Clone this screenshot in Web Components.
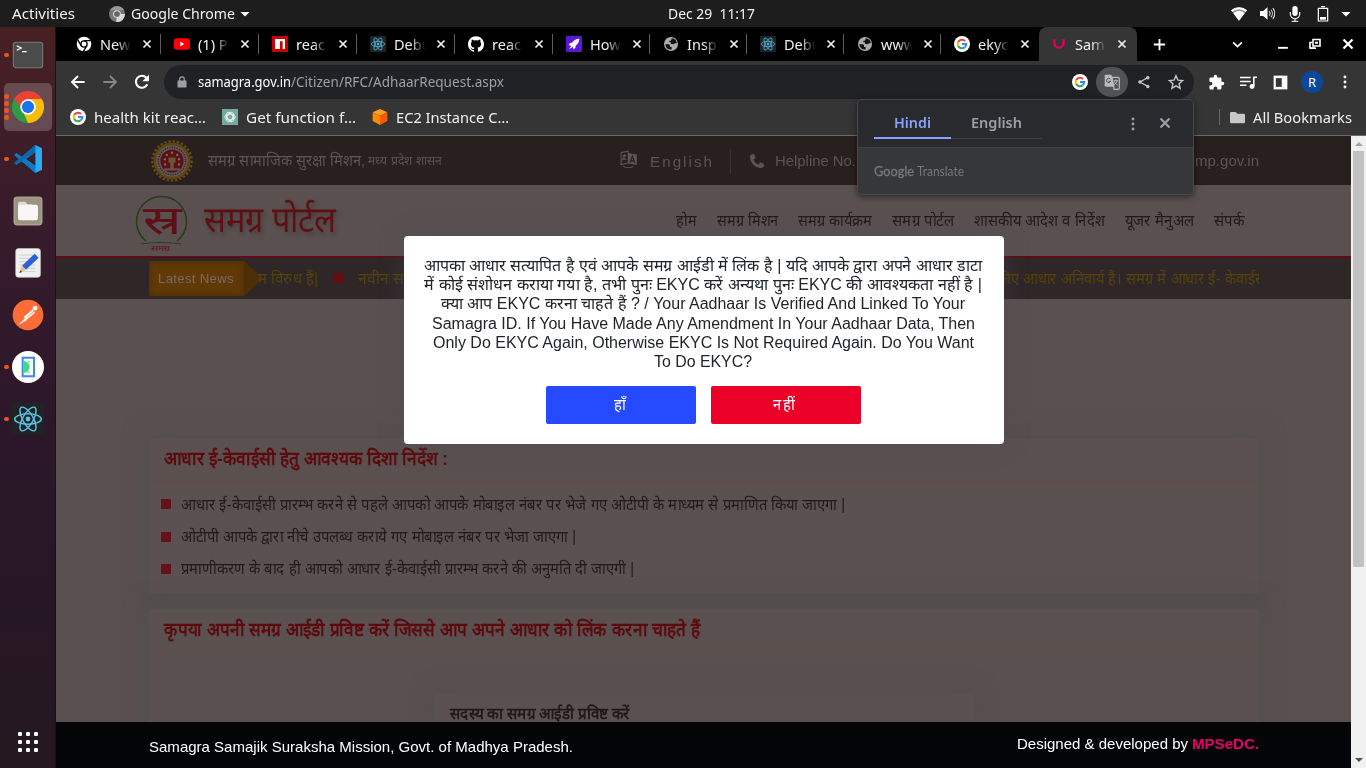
<!DOCTYPE html>
<html lang="hi">
<head>
<meta charset="utf-8">
<title>Samagra</title>
<style>
html,body{margin:0;height:100%;overflow:hidden;background:#000}
body{font-family:"Liberation Sans",Arial,sans-serif}
</style>
</head>
<body>
<desk-top></desk-top>
<script>
const UI = '"Noto Sans","Open Sans",sans-serif';
const G = '<circle cx="12" cy="12" r="12" fill="#fff"/><g fill="none" stroke-width="3.1"><path d="M16.6 7.6A6.4 6.4 0 0 0 6.3 9.1" stroke="#ea4335"/><path d="M6.3 9.1a6.4 6.4 0 0 0 0 5.8" stroke="#fbbc05"/><path d="M6.3 14.9a6.4 6.4 0 0 0 9.6 2.2" stroke="#34a853"/><path d="M12 12.1h6.4a6.4 6.4 0 0 1-2.5 5" stroke="#4285f4"/></g>';
const REACT = '<g fill="none" stroke="#56c4e8" stroke-width="1.1"><ellipse cx="12" cy="12" rx="10" ry="3.9"/><ellipse cx="12" cy="12" rx="10" ry="3.9" transform="rotate(60 12 12)"/><ellipse cx="12" cy="12" rx="10" ry="3.9" transform="rotate(120 12 12)"/></g><circle cx="12" cy="12" r="1.8" fill="#56c4e8"/>';
const GLOBE = '<circle cx="12" cy="12" r="10.5" fill="#a9adb2"/><path d="M3.500 12.500h4.500c1.500 0 2.500 1 2.500 2.500v1.500h2.500v3.500c-6 1.500-9-3-9.500-7.500zM13 3.500c4.500.3 7.500 3.500 7.800 7.500h-3l-1.500 1.500-4.300-.5V9.500h-2.500V7h2l1-1z" fill="#111"/>';
const KNOT = [0,60,120,180,240,300].map(a=>`<path d="M8 14V8.200L12.500 5.500a3.600 3.600 0 0 1 5.300 3.500" transform="rotate(${a} 12 12)"/>`).join('');
const ICONS = {
 chromeMono:'<circle cx="12" cy="12" r="12" fill="#777"/><path d="M12 12L24 12A12 12 0 0 1 11 24z" fill="#d8d8d8"/><path d="M2 6A12 12 0 0 1 22.500 6H12z" fill="#999"/><circle cx="12" cy="12" r="5.800" fill="#ddd"/><circle cx="12" cy="12" r="4.300" fill="#666"/>',
 chromeTab:'<circle cx="12" cy="12" r="11" fill="#fff"/><circle cx="12" cy="12" r="4.700" fill="none" stroke="#000" stroke-width="2"/><path d="M12 7h10M7.700 14.400L2.800 5.800M16.300 14.400L11 23.500" stroke="#000" stroke-width="2"/>',
 chrome:'<path d="M12 12L1.600 6A12 12 0 0 1 22.400 6z" fill="#ea4335"/><path d="M12 12L22.400 6A12 12 0 0 1 12 24z" fill="#fbbc05"/><path d="M12 12L12 24A12 12 0 0 1 1.600 6z" fill="#2a9d45"/><path d="M12 6h10.400L17 15z" fill="#fbbc05"/><path d="M17.200 15L12 24l-3-7z" fill="#fbbc05"/><path d="M1.600 6L7 15l5-9z" fill="#ea4335"/><path d="M1.600 6L7 15l5 3z" fill="#2a9d45"/><circle cx="12" cy="12" r="5.800" fill="#fff"/><circle cx="12" cy="12" r="4.600" fill="#1a73e8"/>',
 youtube:'<rect y="3.500" width="24" height="17" rx="4.500" fill="#f00"/><path d="M9.500 8.500v7l6-3.500z" fill="#fff"/>',
 npm:'<path fill="#cb0000" d="M0 0h24v24H0z"/><path fill="#fff" d="M4.500 4.500h15v15H16V8h-4v11.500H4.500z"/>',
 react:'<rect width="24" height="24" rx="2" fill="#20232a"/>'+REACT,
 reactDock:'<rect width="24" height="24" rx="1" fill="#202224"/>'+REACT,
 github:'<path fill="#fff" d="M12 .5C5.400.5 0 5.800 0 12.500c0 5.300 3.400 9.700 8.200 11.300.6.100.8-.3.800-.6v-2.200c-3.300.7-4-1.400-4-1.400-.6-1.400-1.400-1.800-1.400-1.800-1-.7.1-.7.1-.7 1.200.1 1.900 1.200 1.900 1.200 1 1.900 2.800 1.300 3.500 1 .1-.8.400-1.300.8-1.600-2.700-.3-5.500-1.300-5.500-5.900 0-1.300.5-2.400 1.200-3.200-.1-.3-.5-1.500.1-3.200 0 0 1-.3 3.300 1.200a11.500 11.500 0 0 1 6 0C17.300 5.100 18.300 5.400 18.300 5.400c.6 1.700.2 2.900.1 3.200.8.800 1.200 1.900 1.200 3.200 0 4.600-2.800 5.600-5.500 5.900.5.400.9 1.100.9 2.200v3.300c0 .3.200.7.800.6A12 12 0 0 0 24 12.500C24 5.800 18.600.5 12 .5z"/>',
 rocket:'<rect width="24" height="24" rx="2" fill="#5a17d6"/><path d="M20 4c-5 0-9 2.500-11 6L5.500 11 4 14l4 .500L4.500 20l6-4 .5 4 3-2 .5-3.500C18 12 20 8 20 4z" fill="#fff"/>',
 globe:GLOBE, google:G,
 samagra:'<path d="M5 5v5.500a7 7 0 0 0 14 0V5" fill="none" stroke="#e5005b" stroke-width="3.400"/>',
 x:'<path d="M6 6l12 12M18 6L6 18" stroke="currentColor" stroke-width="3" fill="none"/>',
 plus:'<path d="M12 3v18M3 12h18" stroke="#fff" stroke-width="3"/>',
 chev:'<path d="M4 8l8 8 8-8" stroke="#fff" stroke-width="3" fill="none"/>',
 min:'<path d="M2 20h18" stroke="#fff" stroke-width="3.500"/>',
 restore:'<path d="M8 3h14v13H8zM12 20H2V9h4" stroke="#fff" stroke-width="3.200" fill="none"/><path d="M12 7.500h6v4h-6z" fill="#fff"/><path d="M2 20.500h12" stroke="#fff" stroke-width="3"/>',
 back:'<path d="M22 12H4M12 3l-9 9 9 9" stroke="currentColor" stroke-width="2.800" fill="none"/>',
 fwd:'<path d="M2 12h18M12 3l9 9-9 9" stroke="currentColor" stroke-width="2.800" fill="none"/>',
 reload:'<path d="M20 15.500A9 9 0 1 1 18.500 5.500L20 8" stroke="#fff" stroke-width="3.200" fill="none"/><path d="M22.500 1v10h-10z" fill="#fff"/>',
 lock:'<path d="M3 9h18v14H3z" fill="#9aa0a6"/><path d="M7.500 10V6a4.500 4.500 0 0 1 9 0v4" stroke="#9aa0a6" stroke-width="2.500" fill="none"/>',
 trans:'<path d="M1 1h10l5 18H3a2 2 0 0 1-2-2z" fill="#bbb"/><path d="M12 5h9a2 2 0 0 1 2 2v14a2 2 0 0 1-2 2h-6z" fill="none" stroke="#bbb" stroke-width="1.700"/><path d="M14.500 10h7M18 8v2M20 10c-1 3-3 5-5 6M15.500 11c1 3 3 4 5 6" stroke="#bbb" stroke-width="1.400" fill="none"/><path d="M9.500 7.600A3.200 3.200 0 1 0 10 11H7" stroke="#505256" stroke-width="1.500" fill="none"/>',
 share:'<path d="M18.500 4.500L5 12l13.500 7.500" stroke="#c5c5c5" stroke-width="2" fill="none"/><g fill="#c5c5c5"><circle cx="18.500" cy="4.500" r="3"/><circle cx="5" cy="12" r="3"/><circle cx="18.500" cy="19.500" r="3"/></g>',
 star:'<path d="M12 2.500l2.900 6.600 7.100.7-5.400 4.700 1.600 7L12 17.800 5.800 21.500l1.600-7L2 9.800l7.100-.7z" fill="none" stroke="#c8c8c8" stroke-width="2"/>',
 puzzle:'<path fill="#fff" d="M20.500 11H19V7a2 2 0 0 0-2-2h-4V3.500a2.500 2.500 0 0 0-5 0V5H4a2 2 0 0 0-2 2v3.800h1.500a2.700 2.700 0 0 1 0 5.400H2V20c0 1.100.9 2 2 2h3.800v-1.500a2.700 2.700 0 0 1 5.400 0V22H17a2 2 0 0 0 2-2v-4h1.500a2.500 2.500 0 0 0 0-5z"/>',
 music:'<path d="M0 5h15M0 10.500h15M0 16h9M19.500 17V4.500H24" stroke="#fff" stroke-width="2.200" fill="none"/><circle cx="17" cy="17.500" r="3.500" fill="#fff"/>',
 panel:'<path fill="#fff" d="M1 1h22v22H1z"/><path fill="#353535" d="M4.500 5h9.500v14H4.500z"/>',
 dots:'<g fill="currentColor"><circle cx="12" cy="3.500" r="2.500"/><circle cx="12" cy="12" r="2.500"/><circle cx="12" cy="20.500" r="2.500"/></g>',
 gpt:'<path fill="#74aa9c" d="M0 0h24v24H0z"/><g fill="none" stroke="#fff" stroke-width="1.200">'+KNOT+'</g>',
 cube:'<path d="M12 0l11 5-11 5L1 5z" fill="#ff9d1c"/><path d="M1 5l11 5v14L1 18z" fill="#ff8a00"/><path d="M23 5l-11 5v14l11-6z" fill="#f25c05"/>',
 folder:'<path d="M0 5a2 2 0 0 1 2-2h7l3 3h10a2 2 0 0 1 2 2v11a2 2 0 0 1-2 2H2a2 2 0 0 1-2-2z" fill="#c7c7c7"/>',
 wifi:'<path d="M0 6.500a18 18 0 0 1 24 0L12 22z" fill="#999"/><path d="M0 6.500a18 18 0 0 1 24 0l-1.800 2.200a15 15 0 0 0-20.400 0zM3.500 10.800a13 13 0 0 1 17 0L12 22z" fill="#fff"/>',
 vol:'<path d="M0 8h5l7-6v20l-7-6H0z" fill="#fff"/><path d="M14.500 8.500a5 5 0 0 1 0 7M17.500 6a9 9 0 0 1 0 12M20.500 3.500a13 13 0 0 1 0 17" stroke="#ddd" stroke-width="1.700" fill="none"/>',
 mic:'<rect x="8" y="0" width="8" height="15" rx="4" fill="#fff"/><path d="M5 9v3a7 7 0 0 0 14 0V9M12 19v4M7 23h10" stroke="#ddd" stroke-width="2" fill="none"/>',
 batt:'<path d="M5 3.500h14v19H5zM9 1h6" fill="none" stroke="#fff" stroke-width="1.800"/><path d="M7.500 16.500h9v4h-9z" fill="#fff"/>',
 tri:'<path d="M1 7h22L12 18z" fill="#fff"/>',
 term:'<rect x="1" y="2.500" width="22" height="19" rx="2" fill="#4b4b4b" stroke="#777" stroke-width=".8"/><path d="M3.500 5l3.500 1.700-3.500 1.700M7.500 9.500H11" stroke="#fff" stroke-width=".9" fill="none"/>',
 vscode:'<path d="M17.500 1.500L6 12l11.500 10.500V17L10.500 12l7-5z" fill="#1789d0"/><path d="M3.300 7.500L1.500 9l16 13.500V17z" fill="#0b7bc5"/><path d="M3.300 16.500L1.500 15l16-13.500V7z" fill="#0a69ad"/><path d="M17.500 1.500L22.500 4v16l-5 2.500z" fill="#2ba9f3"/>',
 files:'<rect x="1.500" y="1.500" width="21" height="21" rx="2" fill="#9b9482" stroke="#bdb7a4" stroke-width=".6"/><path d="M4.500 6.500A1.500 1.500 0 0 1 6 5h4l1.500 2H15v3H4.500z" fill="#dedad2"/><rect x="4.500" y="7.300" width="15" height="11.700" rx="1.800" fill="#f8f7f5"/>',
 editor:'<rect x="2.800" y="1.200" width="18.500" height="21.500" rx="2" fill="#f1f1f1" stroke="#ccc" stroke-width=".5"/><path d="M5.500 6h12M5.500 8.500h12M5.500 11h12M5.500 13.500h12M5.500 16h12M5.500 18.500h12" stroke="#ccc" stroke-width=".7"/><path d="M17 5l3 3-9.500 9-3-3z" fill="#2f62d8"/><path d="M7.500 14l3 3-5 2.500z" fill="#e9bd8d"/><path d="M6.500 17.500l1 1.200-2 .8z" fill="#333"/>',
 postman:'<circle cx="12" cy="12" r="11.500" fill="#ff6c37"/><circle cx="17.300" cy="6.800" r="1.800" fill="#fff"/><path d="M15.500 8L9 13.500l2 1.800 6-5zM10 14.500L5.500 18.800l5.500-3z" fill="#fff" stroke="#fff" stroke-width=".4"/><path d="M16.500 9l-5 4.500" stroke="#ff6c37" stroke-width=".6"/>',
 android:'<circle cx="12" cy="12" r="12" fill="#fff"/><path d="M8 5h8.500v14H8z" fill="none" stroke="#4285f4" stroke-width="1.500"/><path d="M8.700 7.500a4.500 4.500 0 0 1 0 9z" fill="#3ddc84"/><path d="M12 8.500l1.200-1M12 15.500l1.200 1" stroke="#3ddc84" stroke-width=".8"/>',
 lang:'<path d="M1.500 3.500l9.500-2v16l-9.500 2z" fill="none" stroke="#5c5353" stroke-width="1.500"/><path d="M11 4l11.500 2v14L11 18z" fill="#5c5353"/><path d="M3.500 7.500h5M6 5.500v2c0 3-1.500 5-3 6M4 9.500c1 2 2.500 3 4.500 3.500" stroke="#5c5353" stroke-width="1.500" fill="none"/><path d="M13.500 16.500l3-8 3.500 9M14.500 14.500h4" stroke="#281f1f" stroke-width="1.700" fill="none"/><path d="M4 21.500c4 2.500 10 2.500 14 .500" stroke="#5c5353" stroke-width="1.400" fill="none"/>',
 phone:'<path fill="#5c5353" d="M6.500 1C4 1 1.500 3 1.500 6 2 15 9 22 18 22.500c3 0 4.800-2.500 4.800-5 0-.6-.3-.8-.8-1.100l-4-2.100c-.7-.4-1.300-.3-1.800.3l-1.700 2.100c-.4.400-.8.500-1.400.2-2.700-1.500-4.600-3.300-6-6-.3-.6-.2-1 .2-1.400l2-1.700c.6-.5.7-1 .4-1.800L7.600 1.900C7.400 1.300 7 1 6.500 1z"/>',
 emblem:'<circle cx="12" cy="12" r="10.500" fill="#5d4612"/><circle cx="12" cy="12" r="11.200" fill="none" stroke="#654b12" stroke-width="1.400" stroke-dasharray="1.300 1.100"/><circle cx="12" cy="12" r="9" fill="#625555"/><circle cx="12" cy="12" r="7.800" fill="none" stroke="#332a2a" stroke-width=".9" stroke-dasharray=".7 .7"/><circle cx="12" cy="12" r="6.600" fill="#5c1014"/><g fill="#75655f"><circle cx="9" cy="8.500" r=".7"/><circle cx="12" cy="7.300" r=".7"/><circle cx="15" cy="8.500" r=".7"/><circle cx="8" cy="11" r=".7"/><circle cx="16" cy="11" r=".7"/><circle cx="8" cy="14" r=".7"/><circle cx="16" cy="14" r=".7"/></g><path d="M10 10h4v3h-1v3.500h-2V13h-1z" fill="#6b5638"/><path d="M7.500 16.800h9" stroke="#625555" stroke-width="1.200"/>',
};
class UiIcon extends HTMLElement{
 connectedCallback(){ if(this.shadowRoot) return;
  const s=this.getAttribute('size')||16;
  this.attachShadow({mode:'open'}).innerHTML=`<style>:host{display:block;flex:none;width:${s}px;height:${s}px}svg{display:block}</style><svg width="${s}" height="${s}" viewBox="0 0 24 24">${ICONS[this.getAttribute('name')]}</svg>`;
 }}
customElements.define('ui-icon',UiIcon);

/* One line of text set to an exact measure. */
class FitText extends HTMLElement{
 static all=[];
 connectedCallback(){ if(this.shadowRoot) return;
  this.w=+this.getAttribute('w');
  this.attachShadow({mode:'open'}).innerHTML=`<style>:host{display:block;flex:none;width:${this.w}px;white-space:pre}span{display:inline-block;transform-origin:0 50%}</style><span><slot></slot></span>`;
  FitText.all.push(this);
 }
 fit(){const s=this.shadowRoot.querySelector('span');const n=s.getBoundingClientRect().width;if(n)s.style.transform=`scaleX(${this.w/n})`;}
}
customElements.define('fit-text',FitText);

const define=(tag,css,html)=>customElements.define(tag,class extends HTMLElement{
 connectedCallback(){ if(this.shadowRoot) return;
  const t=document.createElement('template');
  t.innerHTML=`<style>*{box-sizing:border-box}${css}</style>${typeof html==='function'?html(this):html}`;
  this.attachShadow({mode:'open'}).append(document.importNode(t.content,true));
 }});

define('top-panel',`:host{display:flex;align-items:center;height:27px;background:#1d1d1d;color:#f2f2f2;font:14.500px/27px ${UI};padding:0 15px 0 12px}
 .l{display:flex;align-items:center;width:656px}.r{display:flex;align-items:center;margin-left:auto}`,
 `<div class="l"><fit-text w="63">Activities</fit-text><ui-icon name="chromeMono" size="16" style="margin:0 6px 0 34px"></ui-icon><fit-text w="104">Google Chrome</fit-text><ui-icon name="tri" size="10" style="margin-left:5px"></ui-icon></div>
 <fit-text w="87">Dec 29  11:17</fit-text>
 <div class="r"><ui-icon name="wifi" size="16"></ui-icon><ui-icon name="vol" size="15" style="margin:0 12px 0 13px"></ui-icon><ui-icon name="mic" size="16"></ui-icon><ui-icon name="batt" size="16" style="margin:0 10px 0 12px"></ui-icon><ui-icon name="tri" size="10"></ui-icon></div>`);

define('dock-item',`:host{display:grid;grid-template-columns:8px 1fr;align-items:center;width:48px;height:48px;margin:0 4px 4px;border-radius:5px}
 :host([active]){background:rgba(255,255,255,.2)}
 .d{display:flex;flex-direction:column;gap:2.500px}.d i{width:4.500px;height:4.500px;border-radius:50%;background:#e95420}`,
 h=>`<div class="d">${'<i></i>'.repeat(+h.getAttribute('dots')||0)}</div><ui-icon name="${h.getAttribute('icon')}" size="32"></ui-icon>`);
define('app-dock',`:host{display:flex;flex-direction:column;width:56px;height:741px;padding-top:4px;background:linear-gradient(#482022,#3b1d2a 18%,#2d172b 50%,#281727 68%,#251820);border-right:1px solid #1c1119}
 .g{display:grid;grid-template-columns:repeat(3,4px);gap:4px;margin:auto 0 16px 18px}.g i{height:4px;border-radius:1px;background:#fff}`,
 `<dock-item icon="term" dots="1"></dock-item><dock-item icon="chrome" dots="4" active></dock-item><dock-item icon="vscode" dots="1"></dock-item><dock-item icon="files"></dock-item><dock-item icon="editor"></dock-item><dock-item icon="postman"></dock-item><dock-item icon="android" dots="1"></dock-item><dock-item icon="reactDock" dots="1"></dock-item><div class="g">${'<i></i>'.repeat(9)}</div>`);

define('browser-tab',`:host{display:flex;align-items:center;width:98px;height:34px;padding-left:11px;color:#f0f0f0;flex:none}
 :host([late]){width:97px}
 :host([active]){background:#353535;border-radius:8px 8px 0 0;padding-left:12px;width:98px;margin-left:-1px}
 .t{width:33px;margin:0 7px 0 8px;overflow:hidden;white-space:nowrap;-webkit-mask:linear-gradient(90deg,#000 50%,transparent 95%);mask:linear-gradient(90deg,#000 50%,transparent 95%)}
 .s{width:1px;height:20px;background:#5c5c5c;margin:0 2px 0 auto}:host([active]) .s,:host([last]) .s{display:none}`,
 h=>`<ui-icon name="${h.getAttribute('icon')}" size="16"></ui-icon><div class="t"><slot></slot></div><ui-icon name="x" size="14"></ui-icon><div class="s"></div>`);
define('tab-strip',`:host{display:flex;height:34px;background:#000;padding-left:9px;font:14.500px/34px ${UI};align-items:center}`,
 `<browser-tab icon="chromeTab">New</browser-tab><browser-tab icon="youtube">(1) P</browser-tab><browser-tab icon="npm">reac</browser-tab><browser-tab icon="react">Debu</browser-tab><browser-tab icon="github">reac</browser-tab><browser-tab late icon="rocket">How</browser-tab><browser-tab late icon="globe">Insp</browser-tab><browser-tab late icon="react">Debu</browser-tab><browser-tab late icon="globe">www</browser-tab><browser-tab late icon="google" last>ekyc</browser-tab><browser-tab icon="samagra" active>Sam</browser-tab>
 <ui-icon name="plus" size="15" style="margin-left:15px"></ui-icon><ui-icon name="chev" size="13" style="margin-left:64px"></ui-icon><ui-icon name="min" size="13" style="margin-left:33px;margin-top:-2px"></ui-icon><ui-icon name="restore" size="12" style="margin-left:19px"></ui-icon><ui-icon name="x" size="18" style="margin-left:18px;color:#fff"></ui-icon>`);

define('tool-bar',`:host{display:flex;align-items:center;height:42px;background:#353535;padding-left:14px;color:#fff;font:14px/34px ${UI}}
 .o{display:flex;align-items:center;width:1030px;height:34px;margin:0 14px 0 14px;padding-left:12px;border-radius:17px;background:#202124}
 .u{color:#9aa0a6;display:flex}.g{color:#fff}.c{display:grid;place-items:center;width:32px;height:30px;border-radius:16px;background:#505256;margin:0 12px 0 8px}
 .a{display:grid;place-items:center;width:22px;height:22px;border-radius:50%;background:#0b479b;font-size:13px;line-height:22px;margin:0 15px 0 13px}`,
 `<ui-icon name="back" size="16" style="color:#fff"></ui-icon><ui-icon name="fwd" size="16" style="color:#858585;margin:0 16px"></ui-icon><ui-icon name="reload" size="16"></ui-icon>
 <div class="o"><ui-icon name="lock" size="12" style="margin-right:10px"></ui-icon><div class="u"><fit-text class="g" w="93">samagra.gov.in</fit-text><fit-text w="213">/Citizen/RFC/AdhaarRequest.aspx</fit-text></div>
 <ui-icon name="google" size="16" style="margin-left:auto"></ui-icon><div class="c"><ui-icon name="trans" size="16"></ui-icon></div>
 <ui-icon name="share" size="14" style="margin:0 17px 0 -3px"></ui-icon><ui-icon name="star" size="16" style="margin-right:10px"></ui-icon></div>
 <ui-icon name="puzzle" size="17"></ui-icon><ui-icon name="music" size="17" style="margin:0 16px 0 15px"></ui-icon><ui-icon name="panel" size="15"></ui-icon><div class="a">R</div><ui-icon name="dots" size="14"></ui-icon>`);

define('bookmark-bar',`:host{display:flex;align-items:center;height:33px;background:#353535;border-bottom:1px solid #6a6a6a;padding:0 14px 4px;color:#f0f0f0;font:14.500px/28px ${UI}}
 fit-text{margin:-1px 16px 0 8px}.s{width:1px;height:16px;background:#696969;margin:0 10px 0 auto}`,
 `<ui-icon name="google" size="16"></ui-icon><fit-text w="112">health kit reac…</fit-text><ui-icon name="gpt" size="16"></ui-icon><fit-text w="110">Get function f…</fit-text><ui-icon name="cube" size="16"></ui-icon><fit-text w="113">EC2 Instance C…</fit-text><div class="s"></div><ui-icon name="folder" size="15"></ui-icon><fit-text w="99" style="margin-right:0">All Bookmarks</fit-text>`);

define('translate-bubble',`:host{display:block;box-sizing:border-box;position:absolute;left:857px;top:99px;width:337px;height:96px;background:#353738;border:1px solid #46494b;border-radius:5px;box-shadow:0 2px 6px rgba(0,0,0,.5);overflow:hidden;z-index:3;color:#9aa0a6;font:600 14px/24px ${UI}}
 .h{display:flex;height:48px;background:#292a2d;border-bottom:1px solid #3f4144;padding-left:16px}
 .t{height:39px;padding:11px 20px 0;border-bottom:1px solid #3f4145}.on{color:#8aa2f9;border-bottom:2px solid #8aa2f9}
 .g{display:flex;gap:3px;padding:12px 0 0 16px;font:13px/22px Lato,sans-serif;color:#75787c}.g i{font-style:normal;-webkit-text-stroke:.3px #75787c}`,
 `<div class="h"><div class="t on"><fit-text w="37">Hindi</fit-text></div><div class="t"><fit-text w="51">English</fit-text></div><ui-icon name="dots" size="14" style="margin:17px 0 0 84px"></ui-icon><ui-icon name="x" size="18" style="margin:14px 0 0 16px"></ui-icon></div><div class="g"><fit-text w="40"><i>Google</i></fit-text><fit-text w="47">Translate</fit-text></div>`);

define('gov-strip',`:host{display:flex;box-sizing:border-box;align-items:center;height:49px;background:#281f1f;padding:3px 92px 0 95px;color:#5c5353;font-size:15px;line-height:20px}
 .v{width:1px;height:25px;background:#3a3131;margin:0 18px 0 16px}*{position:relative;top:-1px}`,
 `<ui-icon name="emblem" size="42"></ui-icon><fit-text w="157" style="margin-left:15px;font-size:16px">समग्र सामाजिक सुरक्षा मिशन,</fit-text><fit-text w="74" style="margin-left:3px;font-size:13px">मध्य प्रदेश शासन</fit-text>
 <ui-icon name="lang" size="18" style="margin:-4px 0 0 178px"></ui-icon><fit-text w="64" style="margin-left:12px;letter-spacing:2px;margin-top:1px">English</fit-text><div class="v"></div><ui-icon name="phone" size="16"></ui-icon><fit-text w="81" style="margin-left:10px">Helpline No.</fit-text><fit-text w="64" style="margin-left:auto">mp.gov.in</fit-text>`);

define('site-header',`:host{display:flex;box-sizing:border-box;align-items:center;height:73px;background:#5a5050;border-bottom:2px solid #5d0c18;padding:0 107px 0 77px;color:#211a1a;font-size:16px;line-height:24px}
 .logo{width:56px;height:60px;margin-top:4px}.t{margin:-2px 0 0 14.500px;color:#5e0f13;font-size:36px;line-height:52px;text-shadow:2px 3px 5px rgba(40,30,30,.35)}
 nav{display:flex;gap:20px;margin:0 0 0 auto}svg{display:block}`,
 `<svg class="logo" viewBox="0 0 56 60"><path d="M13 48A25 25 0 1 1 44 48" fill="none" stroke="#263c17" stroke-width="1.500"/><path d="M8 51q20-3 40 0" fill="none" stroke="#263c17" stroke-width="1.200"/><text x="10" y="41" font-size="40" textLength="38" lengthAdjust="spacingAndGlyphs" fill="#5e0f16">स्र</text><text x="18" y="58" font-size="8" textLength="20" lengthAdjust="spacingAndGlyphs" fill="#5e0f2a">समग्र</text></svg>
 <fit-text class="t" w="132">समग्र पोर्टल</fit-text>
 <nav><fit-text w="20.5">होम</fit-text><fit-text w="61.5">समग्र मिशन</fit-text><fit-text w="74">समग्र कार्यक्रम</fit-text><fit-text w="62">समग्र पोर्टल</fit-text><fit-text w="131">शासकीय आदेश व निर्देश</fit-text><fit-text w="69">यूजर मैनुअल</fit-text><fit-text w="30">संपर्क</fit-text></nav>`);

define('news-ticker',`:host{display:flex;box-sizing:border-box;align-items:center;height:41px;background:#2f2628;padding:0 92px 0 93px;color:#534209;font-size:16px;line-height:24px}
 .b{width:95px;height:35px;background:#603907;box-shadow:inset 0 0 7px #4d2f06;border-radius:2px;color:#776a65;font-size:13.500px;line-height:35px;padding-left:9px;letter-spacing:.3px}
 .a{width:19px;height:35px;background:#4c2f07;clip-path:polygon(0 0,100% 50%,0 100%)}i{width:10px;height:10px;background:#630e10;margin:-2px 15px 0}.c{width:262px;overflow:hidden;margin-left:auto}`,
 `<div class="b"><fit-text w="76">Latest News</fit-text></div><div class="a"></div><fit-text w="60" style="margin-left:-5px">म विरुध हैं|</fit-text><i></i><fit-text w="64">नवीन समग्र</fit-text><div class="c"><fit-text w="268">लिए आधार अनिवार्य हैं। समग्र में आधार ई- केवाईस</fit-text></div>`);

define('info-card',`:host{display:block;box-sizing:border-box;background:#5a5050;box-shadow:0 0 20px 8px rgba(73,77,70,.4);border-radius:2px}
 h2{height:43px;margin:0;padding:6px 0 0 14.500px;font-size:19px;line-height:30px;color:#5c0a0e;border-bottom:1px solid #66484a;font-weight:700}`,
 `<h2><slot name="title"></slot></h2><slot></slot>`);
define('note-item',`:host{display:flex;align-items:center;height:32.400px;gap:10px;padding-left:12px;color:#211a1b;font-size:16px;line-height:24px}i{width:10px;height:10px;background:#65101c;margin-top:-1px}`,`<i></i><slot></slot>`);

define('portal-page',`:host{display:flex;flex-direction:column;width:1295px;height:632px;background:#5a5050;overflow:hidden}
 main{height:423px;padding:139px 92px 0 93px;overflow:hidden}
 info-card.a{height:156px;margin-bottom:15px}info-card.b{height:180px}.list{display:flex;flex-direction:column;padding-top:7.500px}
 .in{width:538px;height:100px;margin:41px auto 0;background:#5a5050;box-shadow:0 0 18px 6px rgba(73,77,70,.35);padding:9px 0 0 15px;color:#201919;font-size:16px;font-weight:700;line-height:24px}
 footer{display:flex;align-items:center;justify-content:space-between;height:46px;background:#030507;color:#fff;padding:4px 92px 0 92.500px;font-size:15px;line-height:20px}footer>div{display:flex;gap:4px;margin-top:-6px}b{color:#e5006a}`,
 `<gov-strip></gov-strip><site-header></site-header><news-ticker></news-ticker>
 <main><info-card class="a"><fit-text slot="title" w="284">आधार ई-केवाईसी हेतु आवश्यक दिशा निर्देश :</fit-text>
 <div class="list"><note-item><fit-text w="664">आधार ई-केवाईसी प्रारम्भ करने से पहले आपको आपके मोबाइल नंबर पर भेजे गए ओटीपी के माध्यम से प्रमाणित किया जाएगा |</fit-text></note-item><note-item><fit-text w="395">ओटीपी आपके द्वारा नीचे उपलब्ध कराये गए मोबाइल नंबर पर भेजा जाएगा |</fit-text></note-item><note-item><fit-text w="453">प्रमाणीकरण के बाद ही आपको आधार ई-केवाईसी प्रारम्भ करने की अनुमति दी जाएगी |</fit-text></note-item></div></info-card>
 <info-card class="b"><fit-text slot="title" w="536">कृपया अपनी समग्र आईडी प्रविष्ट करें जिससे आप अपने आधार को लिंक करना चाहते हैं</fit-text><div class="in"><fit-text w="180">सदस्य का समग्र आईडी प्रविष्ट करें</fit-text></div></info-card></main>
 <footer><fit-text w="424">Samagra Samajik Suraksha Mission, Govt. of Madhya Pradesh.</fit-text><div><fit-text w="171">Designed &amp; developed by</fit-text><fit-text w="67"><b>MPSeDC.</b></fit-text></div></footer>`);

define('confirm-dialog',`:host{display:flex;box-sizing:border-box;flex-direction:column;align-items:center;position:absolute;left:404px;top:236px;width:600px;height:208px;background:#fff;border-radius:4px;padding:20px 2px 0 0;color:#212529;font-size:16px;z-index:2;box-shadow:0 0 24px rgba(75,75,90,.4)}
 fit-text{height:19.200px;line-height:19.200px}.r{display:flex;gap:15px;margin-top:14.800px}button{display:grid;place-items:center;width:150px;height:38px;border:0;border-radius:2px;background:#264aff;color:#fff;font:16px/24px "Liberation Sans",sans-serif;padding:0 2px 0 0}button+button{background:#eb0028;letter-spacing:2px}button fit-text{height:24px;line-height:24px}`,
 `<fit-text w="558">आपका आधार सत्यापित है एवं आपके समग्र आईडी में लिंक है | यदि आपके द्वारा अपने आधार डाटा</fit-text><fit-text w="558">में कोई संशोधन कराया गया है, तभी पुनः EKYC करें अन्यथा पुनः EKYC की आवश्यकता नहीं है |</fit-text><fit-text w="524">क्या आप EKYC करना चाहते हैं ? / Your Aadhaar Is Verified And Linked To Your</fit-text><fit-text w="543">Samagra ID. If You Have Made Any Amendment In Your Aadhaar Data, Then</fit-text><fit-text w="541">Only Do EKYC Again, Otherwise EKYC Is Not Required Again. Do You Want</fit-text><fit-text w="98">To Do EKYC?</fit-text>
 <div class="r"><button><fit-text w="12">हाँ</fit-text></button><button><fit-text w="24">नहीं</fit-text></button></div>`);

define('scroll-bar',`:host{display:flex;flex-direction:column;align-items:center;width:15px;height:632px;background:#f1f1f1}i{width:0;border:4px solid transparent;border-top:0;border-bottom:4px solid #a3a3a3;margin:6px 0 5px}b{width:11px;height:416px;background:#c1c1c1}i.d{border-top:4px solid #505050;border-bottom:0;margin:auto 0 6px}`,`<i></i><b></b><i class="d"></i>`);

define('desk-top',`:host{display:grid;grid-template:27px 741px/56px 1310px;width:1366px;height:768px;position:relative;overflow:hidden}top-panel{grid-column:1/3}.w{display:flex;flex-direction:column}.p{display:flex}`,
 `<top-panel></top-panel><app-dock></app-dock><div class="w"><tab-strip></tab-strip><tool-bar></tool-bar><bookmark-bar></bookmark-bar><div class="p"><portal-page></portal-page><scroll-bar></scroll-bar></div></div><confirm-dialog></confirm-dialog><translate-bubble></translate-bubble>`);
FitText.all.forEach(e=>e.fit());
</script>
</body>
</html>
